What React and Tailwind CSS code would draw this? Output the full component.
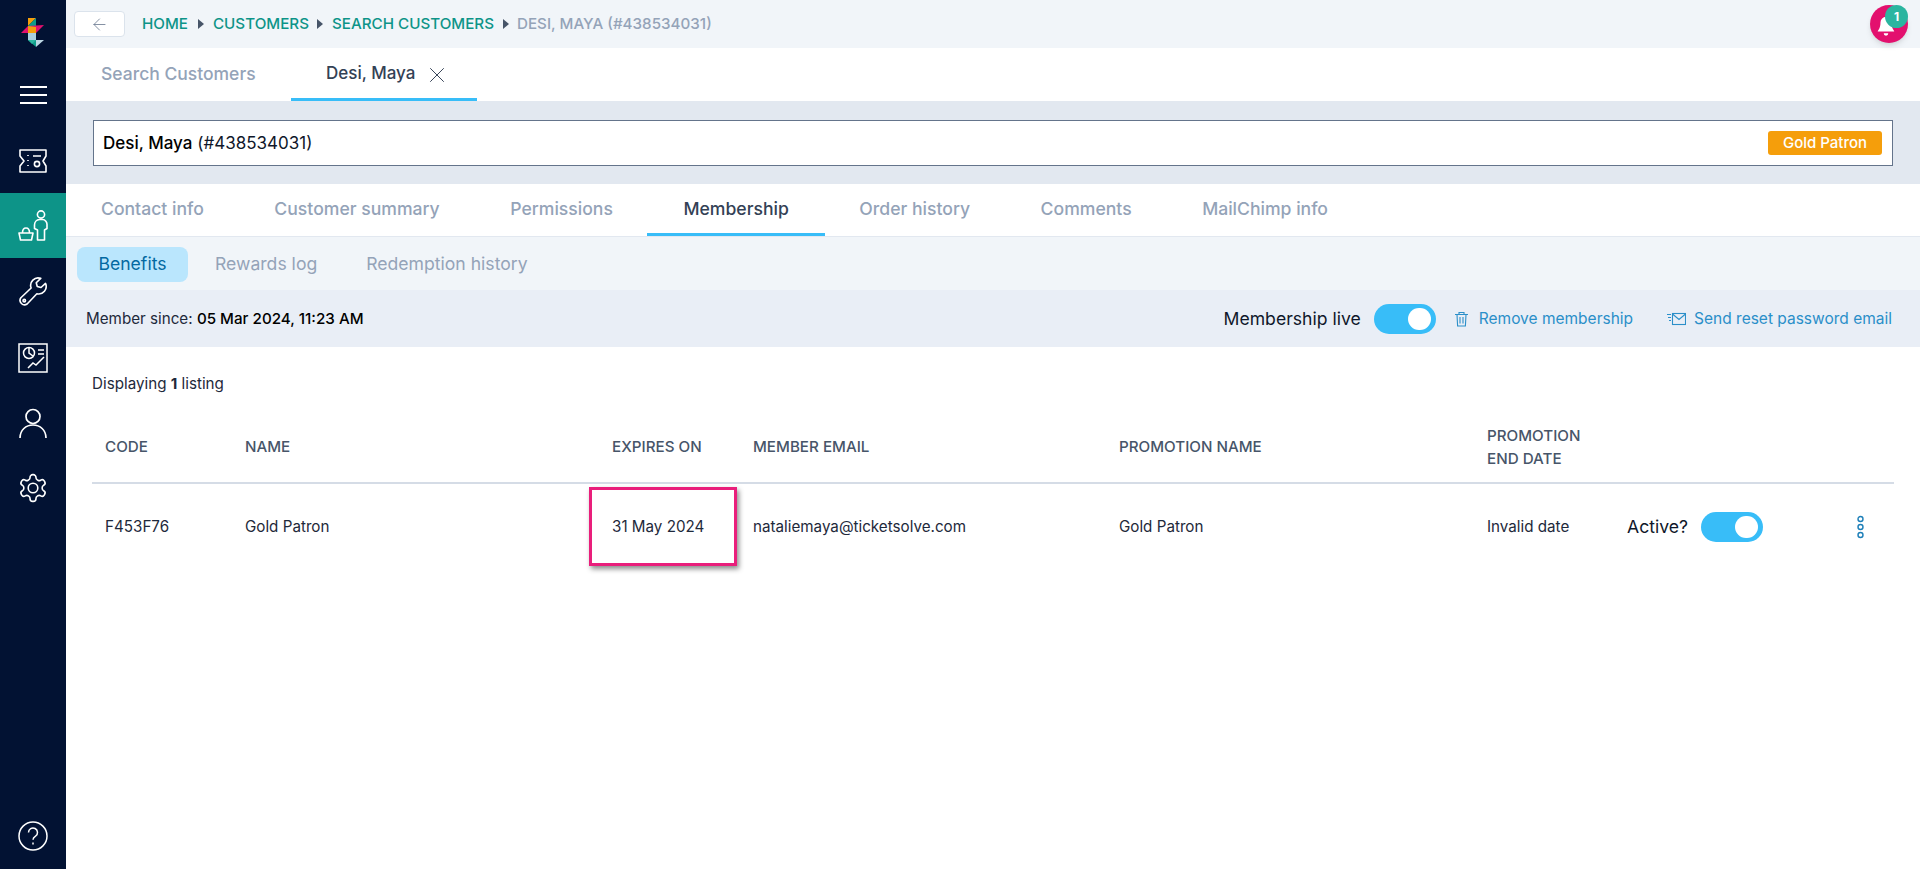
import React from 'react';
import { ArrowLeft, X } from 'lucide-react';

const Logo = () => (
  <svg width="24" height="30" viewBox="0 0 24 30">
    <polygon points="7,0 15,0 7,8" fill="#f59e0b" />
    <polygon points="15,0 15,8 7,8" fill="#0f9d8a" />
    <rect x="7" y="8" width="8" height="7" fill="#f59e0b" />
    <polygon points="0,15 7,8 7,15" fill="#e3106e" />
    <polygon points="7,8 23,7 15,15 15,9" fill="#e3106e" />
    <rect x="7" y="15" width="8" height="7" fill="#a9cfe0" />
    <polygon points="7,22 15,22 15,29" fill="#0f9d8a" />
    <polygon points="15,22 23,22 15,29" fill="#bcd7e4" />
    <polygon points="7,22 15,22 11,26" fill="#2bb5a0" />
  </svg>
);

const Ticket = () => (
  <svg width="30" height="24" viewBox="0 0 30 24" fill="none" stroke="white" strokeWidth="1.6">
    <path d="M2 1h26v6l-3 5 3 5v6H2v-6l4-5-4-5z" strokeLinejoin="round" />
    <path d="M10 6v1M10 11v1M10 16v1M15 7h8" />
    <circle cx="19" cy="15" r="2.6" />
  </svg>
);

const Customer = () => (
  <svg width="30" height="31" viewBox="0 0 30 31" fill="none" stroke="white" strokeWidth="1.6">
    <circle cx="23" cy="4.500" r="3.600" />
    <path d="M19.500 30V20l-3-1.500V15a5.500 5.500 0 0 1 5-5.500h3a4.500 5 0 0 1 4.500 5.500v3.500l-2.500 1.500v10z" strokeLinejoin="round" />
    <path d="M1 23h14l-1.500 7h-11zM4.500 23c0-3 1.500-5 3.500-5s3.500 2 3.500 5" strokeLinejoin="round" />
  </svg>
);

const Wrench = () => (
  <svg width="30" height="31" viewBox="0 0 24 24" fill="none" stroke="white" strokeWidth="1.3" strokeLinejoin="round">
    <path d="M22 5.500l-3.600 3.300-3-.8-.8-3L18.200 1.500a6 6 0 0 0-7.700 7.700L2.300 17a3.600 3.600 0 0 0 5 5l7.800-8.200A6 6 0 0 0 22 5.500z" />
    <circle cx="5" cy="19.300" r="1" />
  </svg>
);

const Report = () => (
  <svg width="30" height="30" viewBox="0 0 30 30" fill="none" stroke="white" strokeWidth="1.5">
    <rect x="1" y="1" width="28" height="28" />
    <circle cx="11" cy="10" r="5.500" />
    <path d="M11 5v5l4 3M20 7h6M20 11h6" />
    <path d="M10 25l5-5 3 2 8-8" />
  </svg>
);

const User = () => (
  <svg width="28" height="30" viewBox="0 0 28 30" fill="none" stroke="white" strokeWidth="1.7">
    <circle cx="14" cy="8.500" r="7" />
    <path d="M1 30c0-8 6-13 13-13s13 5 13 13" />
  </svg>
);

const Gear = () => (
  <svg width="32" height="32" viewBox="0 0 24 24" fill="none" stroke="white" strokeWidth="1.2">
    <path d="M12.220 2h-.44a2 2 0 0 0-2 2v.18a2 2 0 0 1-1 1.730l-.43.25a2 2 0 0 1-2 0l-.15-.08a2 2 0 0 0-2.730.73l-.22.38a2 2 0 0 0 .73 2.730l.15.1a2 2 0 0 1 1 1.720v.51a2 2 0 0 1-1 1.740l-.15.09a2 2 0 0 0-.73 2.730l.22.38a2 2 0 0 0 2.730.73l.15-.08a2 2 0 0 1 2 0l.43.25a2 2 0 0 1 1 1.730V20a2 2 0 0 0 2 2h.44a2 2 0 0 0 2-2v-.18a2 2 0 0 1 1-1.730l.43-.25a2 2 0 0 1 2 0l.15.08a2 2 0 0 0 2.730-.73l.22-.39a2 2 0 0 0-.73-2.730l-.15-.08a2 2 0 0 1-1-1.740v-.5a2 2 0 0 1 1-1.740l.15-.09a2 2 0 0 0 .73-2.730l-.22-.38a2 2 0 0 0-2.730-.73l-.15.08a2 2 0 0 1-2 0l-.43-.25a2 2 0 0 1-1-1.730V4a2 2 0 0 0-2-2z" />
    <circle cx="12" cy="12" r="3.600" />
  </svg>
);

const Help = () => (
  <svg width="30" height="30" viewBox="0 0 30 30" fill="none" stroke="white" strokeWidth="1.5">
    <circle cx="15" cy="15" r="14" />
    <path d="M10.500 11.500a4.500 4.500 0 1 1 7 3.700c-1.600 1-2.500 1.800-2.500 3.600" />
    <path d="M15 21.500v2" />
  </svg>
);

const Trash = () => (
  <svg width="15" height="16" viewBox="0 0 15 16" fill="none" stroke="#2b8fc9" strokeWidth="1.100">
    <path d="M1 3.500h13M5 3.500V1.500h5v2M3 3.500l.6 11.500h7.800L12 3.500M6 6v6.500M9 6v6.500" />
  </svg>
);

const Mail = () => (
  <svg width="19" height="14" viewBox="0 0 19 14" fill="none" stroke="#2b8fc9" strokeWidth="1.100">
    <rect x="5.500" y="1.500" width="13" height="11" />
    <path d="M5.500 2l6.500 5.500L18.500 2M0 2.500h4M1 5.500h3M2 8.500h2" />
  </svg>
);

const Toggle = ({ className }) => (
  <div className={`w-[62px] h-[30px] rounded-full bg-[#38bdf8] flex items-center justify-end pr-[5px] ${className || ''}`}>
    <div className="w-[23px] h-[22px] rounded-full bg-white" />
  </div>
);

const Caret = () => (
  <svg width="8" height="12" viewBox="0 0 8 12"><polygon points="1,1 7,6 1,11" fill="#475569" /></svg>
);

const navItems = [
  { icon: <Ticket />, h: 'h-[65px]' },
  { icon: <Customer />, h: 'h-[65px]', active: true },
  { icon: <Wrench />, h: 'h-[67px]' },
  { icon: <Report />, h: 'h-[65px]' },
  { icon: <User />, h: 'h-[66px]' },
  { icon: <Gear />, h: 'h-[64px]' },
];

const pageTabs = ['Contact info', 'Customer summary', 'Permissions', 'Membership', 'Order history', 'Comments', 'MailChimp info'];

const Sidebar = () => (
  <aside className="w-[66px] shrink-0 bg-[#021233] flex flex-col items-stretch">
    <div className="h-[78px] flex items-start justify-center pt-[18px]"><Logo /></div>
    <div className="h-[50px] flex items-start justify-center pt-[8px]">
      <div className="w-[27px] h-[18px] flex flex-col justify-between">
        <div className="h-[2px] bg-white" />
        <div className="h-[2px] bg-white" />
        <div className="h-[2px] bg-white" />
      </div>
    </div>
    <div className="flex flex-col">
      {navItems.map((n, i) => (
        <div key={i} className={`${n.h} flex items-center justify-center ${n.active ? 'bg-[#0d9488]' : ''}`}>{n.icon}</div>
      ))}
    </div>
    <div className="mt-auto h-[48px] flex items-start justify-center"><Help /></div>
  </aside>
);

const App = () => (
  <div className='flex w-[1920px] h-[869px] overflow-hidden bg-white font-["Inter",sans-serif]'>
    <Sidebar />
    <main className="flex-1 flex flex-col min-w-0">
      <div className="h-[48px] bg-[#f1f5f9] flex items-center pl-[8px] pr-[12px] text-[15.2px]">
        <button className="w-[51px] h-[26px] bg-white border border-[#dbe3ec] rounded-[4px] flex items-center justify-center text-[#64748b]">
          <ArrowLeft size={19} strokeWidth={1} />
        </button>
        <div className="ml-[17px] flex items-center gap-[7.5px] text-[#0d9488] font-medium">
          <span className="mr-[2px]">HOME</span><Caret /><span>CUSTOMERS</span><Caret /><span>SEARCH CUSTOMERS</span><Caret />
          <span className="text-[#94a3b8]">DESI, MAYA (#438534031)</span>
        </div>
        <div className="ml-auto relative w-[38px] h-[38px] rounded-full bg-[#e3106e] shadow-md flex items-center justify-center">
          <svg className="mr-[6px] mt-[4px]" width="22" height="22" viewBox="0 0 24 24" fill="white"><path d="M12 2a6 6 0 0 0-6 6c0 7-3 9-3 10h18c0-1-3-3-3-10a6 6 0 0 0-6-6zM9.500 20a2.500 2.500 0 0 0 5 0z" /></svg>
          <span className="absolute top-0 right-0 w-[23px] h-[23px] rounded-full bg-[#2bb5a0] text-white text-[12px] font-bold flex items-center justify-center">1</span>
        </div>
      </div>

      <div className="h-[53px] flex items-stretch text-[17.5px] font-medium">
        <div className="w-[225px] flex items-center pl-[35px] pt-[2px] text-[#94a3b8] border-b-[3px] border-transparent">Search Customers</div>
        <div className="w-[186px] flex items-center pl-[35px] pt-[2px] gap-[9px] text-[#334155] border-b-[3px] border-[#38bdf8]">
          <span className="text-[17px]">Desi, Maya</span><X className="mt-[1px]" size={26} strokeWidth={0.9} />
        </div>
      </div>

      <div className="h-[83px] bg-[#e2e8f0] px-[27px] py-[19px]">
        <div className="h-[46px] bg-white border border-[#64748b] flex items-center justify-between pl-[9px] pr-[10px]">
          <span className="text-[17px] text-[#0f172a] mt-[2px]"><span className="font-medium text-black">Desi, Maya</span> (#438534031)</span>
          <span className="w-[114px] h-[24px] bg-[#f59e0b] rounded-[3px] text-white text-[15px] font-medium flex items-center justify-center">Gold Patron</span>
        </div>
      </div>

      <div className="h-[53px] flex items-stretch pl-[35px] gap-[70.5px] text-[17.6px] font-medium text-[#94a3b8] border-b border-[#e2e8f0]">
        {pageTabs.map(t => t === 'Membership' ? (
          <div key={t} className="flex items-center pt-[2px] px-[36px] mx-[-36px] text-[#334155] border-b-[3px] border-[#38bdf8]">{t}</div>
        ) : (
          <div key={t} className="flex items-center pt-[2px] border-b-[3px] border-transparent">{t}</div>
        ))}
      </div>

      <div className="h-[53px] bg-[#f1f5f9] flex items-center pl-[11px] pt-[2px] text-[17.6px] text-[#94a3b8]">
        <div className="w-[111px] h-[35px] rounded-[8px] bg-[#bae6fd] text-[#0369a1] flex items-center justify-center">Benefits</div>
        <span className="ml-[27px]">Rewards log</span>
        <span className="ml-[49px]">Redemption history</span>
      </div>

      <div className="h-[57px] bg-[#e9eef6] flex items-center pl-[20px] pr-[28px] text-[15.2px]">
        <span className="text-[#1e293b] mt-[1px]">Member since: <span className="font-medium text-black">05 Mar 2024, 11:23 AM</span></span>
        <div className="ml-auto flex items-center">
          <span className="text-[17.6px] text-[#0f172a] mt-[2px]">Membership live</span>
          <Toggle className="ml-[13px]" />
          <span className="ml-[18px]"><Trash /></span>
          <span className="ml-[10px] text-[15.500px] text-[#2b8fc9]">Remove membership</span>
          <span className="ml-[34px]"><Mail /></span>
          <span className="ml-[8px] text-[15.500px] text-[#2b8fc9]">Send reset password email</span>
        </div>
      </div>

      <div className="pl-[26px] pr-[26px]">
        <div className="mt-[27px] h-[20px] text-[15.2px] text-[#1e293b] flex items-center">
          <span>Displaying <span className="font-bold">1</span> listing</span>
        </div>
        <div className="mt-[16px] h-[74px] pt-[2px] grid grid-cols-[140px_367px_141px_366px_368px_1fr] items-center border-b-2 border-[#d5dce6] text-[15.2px] font-medium text-[#475569] pl-[13px]">
          <span>CODE</span>
          <span>NAME</span>
          <span>EXPIRES ON</span>
          <span>MEMBER EMAIL</span>
          <span>PROMOTION NAME</span>
          <span className="leading-[23px]">PROMOTION<br />END DATE</span>
        </div>
        <div className="h-[86px] grid grid-cols-[140px_367px_141px_366px_368px_140px_1fr] items-center text-[15.2px] text-[#1e293b] pl-[13px]">
          <span>F453F76</span>
          <span>Gold Patron</span>
          <span className="relative">
            31 May 2024
            <span className="absolute left-[-23px] top-[-29px] w-[148px] h-[79px] border-[3px] border-[#e91e7b] shadow-[2px_3px_5px_rgba(0,0,0,0.45)]" />
          </span>
          <span>nataliemaya@ticketsolve.com</span>
          <span>Gold Patron</span>
          <span>Invalid date</span>
          <span className="flex items-center">
            <span className="w-[74px] text-[17.6px] text-[#0f172a] mt-[1px]">Active?</span>
            <Toggle />
            <svg className="ml-[93px]" width="9" height="24" viewBox="0 0 9 24" fill="none" stroke="#1d7fb8" strokeWidth="1.400">
              <circle cx="4.500" cy="4" r="2.500" />
              <circle cx="4.500" cy="12" r="2.500" />
              <circle cx="4.500" cy="20" r="2.500" />
            </svg>
          </span>
        </div>
      </div>
    </main>
  </div>
);

export default App;
